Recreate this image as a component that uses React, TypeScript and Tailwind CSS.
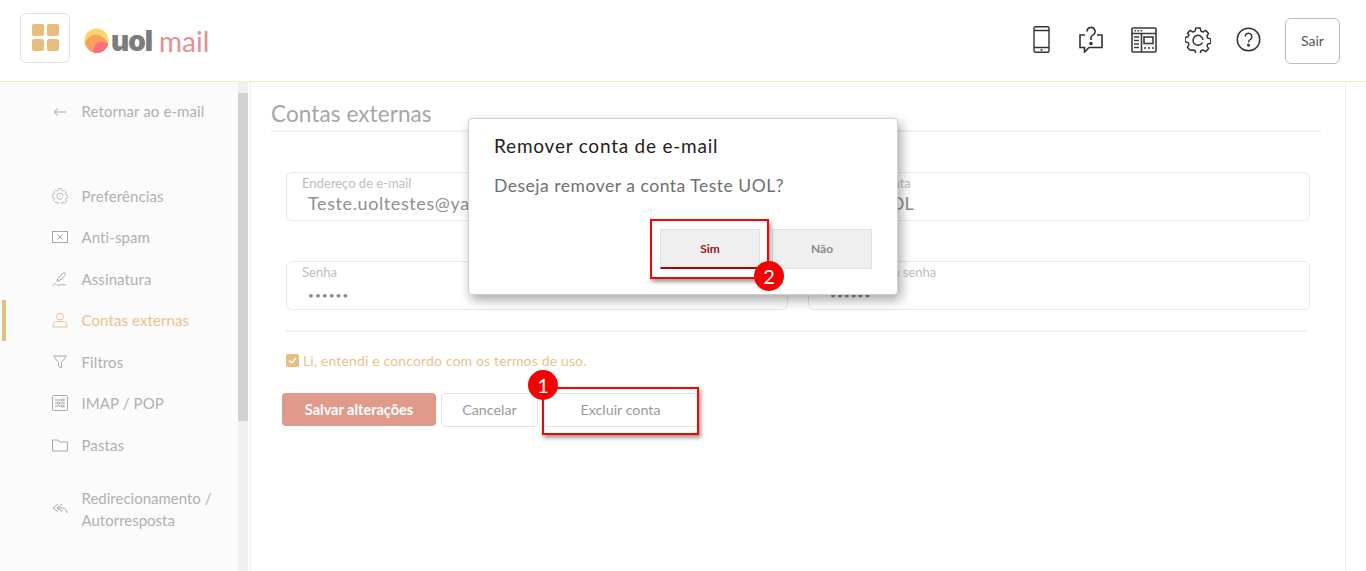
import React from 'react';

const FONT = "font-['Lato','Open_Sans',sans-serif]";

function Phone() {
  return (
    <svg width="17" height="27" viewBox="0 0 17 27" fill="none" stroke="#333" strokeWidth="1.4">
      <rect x="1" y=".8" width="15" height="25.400" rx="1.500" />
      <path d="M1 4.500h15M1 21.500h15" />
      <rect x="7.500" y="23.200" width="2" height="1.500" fill="#333" stroke="none" />
    </svg>
  );
}

function HelpChat() {
  return (
    <svg width="24" height="27" viewBox="0 0 24 27" fill="none" stroke="#333" strokeWidth="1.6">
      <path d="M6 9H1v12.500h4.500V26l4.500-4.500h13V9h-5" />
      <path d="M8 5.500a4 4 0 1 1 6 3.400c-1.300.8-2 1.600-2 3.100v2" />
      <circle cx="12" cy="17.500" r="1" fill="#333" />
    </svg>
  );
}

function Layout() {
  return (
    <svg width="26" height="26" viewBox="0 0 26 26" fill="none" stroke="#3a3a3a" strokeWidth="1.600">
      <rect x="1" y="1" width="24" height="24" rx="1" />
      <path d="M1 6.500h24M10.500 6.500V25" />
      <path d="M3.500 3.800h1.500M6.500 3.800h1.500M9.500 3.800h1.500M3 10h5M3 13.500h5M3 17h5M3 20.500h5" />
      <rect x="13" y="10" width="9" height="6.500" />
      <path d="M13 21h2M17 21h2M21 21h2" />
    </svg>
  );
}

function Gear({ size = 26, color = '#333', sw = 1.5 }: { size?: number; color?: string; sw?: number }) {
  return (
    <svg width={size} height={size} viewBox="0 0 26 26" fill="none" stroke={color} strokeWidth={sw} strokeLinejoin="round">
      <path d="M10.800 1.500h4.400l.8 3.300 2 .9 2.900-1.700 3 3.100-1.700 2.800.8 2.100 3.200.8v4.400l-3.200.8-.8 2 1.700 2.900-3 3-2.900-1.700-2 .8-.8 3.200h-4.400l-.8-3.200-2-.8L5 24.500l-3-3 1.700-2.900-.8-2-3.200-.8v-4.400l3.200-.8.8-2.100L2 7.100l3-3.100 2.900 1.700 2-.9z" transform="translate(.4 -.5) scale(.97)" />
      <path d="M17.500 15.500A5 5 0 1 1 18 13" />
    </svg>
  );
}

function Question() {
  return (
    <svg width="25" height="25" viewBox="0 0 26 26" fill="none" stroke="#333" strokeWidth="1.500">
      <circle cx="13" cy="13" r="11.700" />
      <path d="M9.500 10a3.500 3.500 0 1 1 5.300 3c-1.200.8-1.800 1.400-1.800 3" />
      <circle cx="13" cy="19" r=".8" fill="#333" />
    </svg>
  );
}

const navStroke = '#a9a9a9';

function NavIcon({ name, color = navStroke }: { name: string; color?: string }) {
  const p = { width: 16, height: 16, viewBox: '0 0 16 16', fill: 'none', stroke: color, strokeWidth: 1 };
  if (name === 'back') return <svg {...p}><path d="M2 8h12.500M6 4.500 2 8l4 3.500" /></svg>;
  if (name === 'gear') return <Gear size={16} color={color} sw={1.300} />;
  if (name === 'spam') return <svg {...p}><rect x=".5" y="2.500" width="15" height="11" /><path d="m5.500 5.500 5 5M10.500 5.500l-5 5" /></svg>;
  if (name === 'sign') return <svg {...p}><path d="M5 10.500l.8-3 5.500-5.500c1-.8 2.800.9 2 2L8 9.500z" /><path d="M.5 15c2-3 3-2.500 4-1.500s2 1 3.500 .5 4-.5 6 0" /></svg>;
  if (name === 'user') return <svg {...p}><circle cx="8" cy="4.500" r="3.500" /><path d="M1 15v-2c0-2 2-3.500 4-3.500h6c2 0 4 1.500 4 3.500v2z" /></svg>;
  if (name === 'filter') return <svg {...p}><path d="M1.500 2h13L9.500 8.500V14l-3-2V8.500z" /></svg>;
  if (name === 'imap') return <svg {...p}><rect x=".5" y=".5" width="15" height="15" rx="1" /><path d="M3 5h6.500M12 5h1M3 8h2.500M8 8h5M3 11h6.500M12 11h1" /><circle cx="10.500" cy="5" r="1.200" /><circle cx="6.500" cy="8" r="1.200" /><circle cx="10.500" cy="11" r="1.200" /></svg>;
  if (name === 'folder') return <svg {...p}><path d="M.5 14V3h5.500l1.500 2h8v9z" /></svg>;
  return <svg {...p}><path d="M6 3 1 7l5 3.500M10 3 5 7l5 3.500" /><path d="M5 7h5.500c2.500 0 4 2 5 5" /></svg>;
}

const navItems = [
  { icon: 'gear', label: 'Preferências' },
  { icon: 'spam', label: 'Anti-spam' },
  { icon: 'sign', label: 'Assinatura' },
  { icon: 'user', label: 'Contas externas', active: true },
  { icon: 'filter', label: 'Filtros' },
  { icon: 'imap', label: 'IMAP / POP' },
  { icon: 'folder', label: 'Pastas' },
];

function Field({ label, value, kind }: { label: string; value: string; kind: 'wide' | 'tight' | 'dots' }) {
  const valueClass = {
    wide: 'mt-[1px] pl-[6px] text-[18px] leading-[24px] tracking-[.6px] text-[#8f8f8f]',
    tight: 'mt-[1px] pl-[5px] text-[18px] leading-[24px] tracking-[.2px] text-[#8f8f8f]',
    dots: 'mt-[4px] pl-[6px] text-[10px] leading-[24px] tracking-[1.100px] text-[#8a8a8a]',
  }[kind];
  return (
    <div className="h-[49px] flex-1 rounded-md border border-[#e8e8e8] pl-[15px]">
      <div className="mt-[3px] text-[13px] leading-[14px] text-[#bdbdbd]">{label}</div>
      <div className={valueClass}>{value}</div>
    </div>
  );
}

export default function App() {
  return (
    <div className={`${FONT} flex h-[571px] w-[1366px] flex-col overflow-hidden bg-white`}>
      <header className="flex h-[82px] shrink-0 items-center border-b border-[#f3ecb4] pl-5 pr-[26px]">
        <button className="mb-[6px] grid h-[50px] w-[50px] grid-cols-2 content-center justify-center gap-[3px] rounded-md border border-[#e3e3e3] px-[11px]">
          <span className="h-[12px] w-[12px] rounded-[2px] bg-[#e7bd80]" />
          <span className="h-[12px] w-[12px] rounded-[2px] bg-[#e7bd80]" />
          <span className="h-[12px] w-[12px] rounded-[2px] bg-[#e7bd80]" />
          <span className="h-[12px] w-[12px] rounded-[2px] bg-[#e7bd80]" />
        </button>
        <svg className="ml-[14px]" width="25" height="25" viewBox="0 0 25 25">
          <circle cx="12.500" cy="12.500" r="12" fill="#fdd36c" />
          <path d="M1 15c2-6 8-9 13-8 4 1 8 4 10 8-1 6-6 10-11.500 10S2 21 1 15z" fill="#f5a25f" />
          <path d="M9 24c0-7 5-11 10-10 3 .5 5 2 5 3-2 5-6 8-11 8-1.500 0-3-.3-4-1z" fill="#fb6f7d" />
        </svg>
        <span className="ml-[2px] font-['Inter',sans-serif] text-[28px] font-black leading-none tracking-[-1px] text-[#7c7c7c]">uol</span>
        <span className="ml-[7px] text-[28px] leading-none text-[#e78f90]">mail</span>
        <div className="ml-auto flex items-center">
          <div className="mb-[2px] flex items-center">
            <div className="flex w-[50px] justify-center"><Phone /></div>
            <div className="flex w-[50px] justify-center"><HelpChat /></div>
            <div className="flex w-[56px] justify-center"><Layout /></div>
            <div className="flex w-[52px] justify-center"><Gear /></div>
            <div className="flex w-[48px] justify-center"><Question /></div>
          </div>
          <button className="ml-[13px] h-[46px] w-[55px] rounded-md border border-[#bcbcbc] text-[14px] text-[#555]">Sair</button>
        </div>
      </header>

      <div className="flex min-h-0 flex-1">
        <aside className="flex w-[251px] shrink-0 border-r border-[#efefef]">
          <nav className="w-[238px] bg-[#fbfbfb] pt-[9px] text-[15px] text-[#b0b0b0]">
            <div className="flex h-[41px] items-center pl-[52px]">
              <NavIcon name="back" />
              <span className="ml-[13.500px] tracking-[.1px]">Retornar ao e-mail</span>
            </div>
            <ul className="mt-[43px]">
              {navItems.map((item) => (
                <li key={item.label} className={`flex h-[41.500px] items-center ${item.active ? 'ml-[2px] border-l-4 border-[#e7bd80] pl-[46px] text-[#edc18c]' : 'pl-[52px]'}`}>
                  <NavIcon name={item.icon} color={item.active ? '#edc18c' : navStroke} />
                  <span className="ml-[13.500px] tracking-[.1px]">{item.label}</span>
                </li>
              ))}
            </ul>
            <div className="mt-[21px] flex items-center pl-[52px] leading-[22px]">
              <NavIcon name="reply" />
              <span className="ml-[13.500px]">Redirecionamento /<br />Autorresposta</span>
            </div>
          </nav>
          <div className="h-full w-[10px] bg-[#f0f0f0]">
            <div className="mt-[11px] h-[328px] bg-[#d2d2d2]" />
          </div>
        </aside>

        <main className="w-[1095px] shrink-0 border-r border-[#efefef] pl-[20px] pr-[24px] pt-[17px]">
          <h1 className="border-b-2 border-[#f1f1f1] pb-[2px] text-[22.500px] leading-[29px] tracking-[.1px] text-[#a6a6a6]">Contas externas</h1>
          <div className="mt-[40px] pl-[15px] pr-[11px]">
            <div className="flex gap-[20px]">
              <Field label="Endereço de e-mail" value="Teste.uoltestes@yahoo.com" kind="wide" />
              <Field label="Nome da conta" value="Teste UOL" kind="tight" />
            </div>
            <div className="mt-[40px] flex gap-[20px]">
              <Field label="Senha" value="••••••" kind="dots" />
              <Field label="Confirme sua senha" value="••••••" kind="dots" />
            </div>
            <div className="mr-[3px] mt-[20px] h-[2px] bg-[#f1f1f1]" />
            <label className="mt-[18px] flex items-center text-[14px] tracking-[.15px] text-[#edc18c]">
              <span className="flex h-[13px] w-[13px] items-center justify-center rounded-[2px] bg-[#e7bd80]">
                <svg width="9" height="9" viewBox="0 0 9 9" fill="none" stroke="#fff" strokeWidth="1.600"><path d="m1 4.500 2.500 2.500L8 2" /></svg>
              </span>
              <span className="ml-[4px]">Li, entendi e concordo com os termos de uso.</span>
            </label>
          </div>
          <div className="ml-[11px] mt-[22px] flex items-start text-[14.300px]">
            <button className="h-[33px] w-[154px] rounded-[4px] bg-[#e09a8b] text-[14.500px] font-bold text-white">Salvar alterações</button>
            <button className="ml-[5px] h-[34px] w-[97px] rounded-[4px] border border-[#e3e3e3] text-[#9a9a9a]">Cancelar</button>
            <button className="ml-[5px] h-[34px] w-[155px] rounded-[4px] border border-[#e3e3e3] text-[#9a9a9a]">Excluir conta</button>
          </div>
        </main>
      </div>

      {/* modal */}
      <div className="absolute left-[468px] top-[118px] h-[177px] w-[430px] rounded-[4px] border border-[#cfcfcf] bg-white pl-[25px] pt-[16px] shadow-[3px_5px_12px_rgba(0,0,0,.35)]">
        <div className="text-[19px] leading-[22px] tracking-[.78px] text-[#222]">Remover conta de e-mail</div>
        <div className="mt-[18px] text-[17.500px] leading-[22px] tracking-[.52px] text-[#6f6f6f]">Deseja remover a conta Teste UOL?</div>
        <div className="mt-[32px] flex pl-[166px] text-[12px] font-bold">
          <button className="h-[40px] w-[100px] border border-[#e0e0e0] border-b-2 border-b-[#b00000] bg-[#efefef] text-[#a31515]">Sim</button>
          <button className="ml-[12px] h-[40px] w-[100px] border border-[#e0e0e0] bg-[#efefef] text-[#8a8a8a]">Não</button>
        </div>
      </div>

      {/* annotations */}
      <div className="absolute left-[542px] top-[387px] h-[48px] w-[157px] border-[2px] border-[#ff0000] shadow-[2px_3px_4px_rgba(0,0,0,.4)]" />
      <div className="absolute left-[650px] top-[219px] h-[60px] w-[119px] border-[2px] border-[#ff0000] shadow-[2px_3px_4px_rgba(0,0,0,.4)]" />
      <div className="absolute left-[528px] top-[370px] flex h-[30px] w-[30px] items-center justify-center rounded-full bg-[#f50000] text-[20px] text-white">1</div>
      <div className="absolute left-[754px] top-[261px] flex h-[30px] w-[30px] items-center justify-center rounded-full bg-[#f50000] text-[20px] text-white">2</div>
    </div>
  );
}
